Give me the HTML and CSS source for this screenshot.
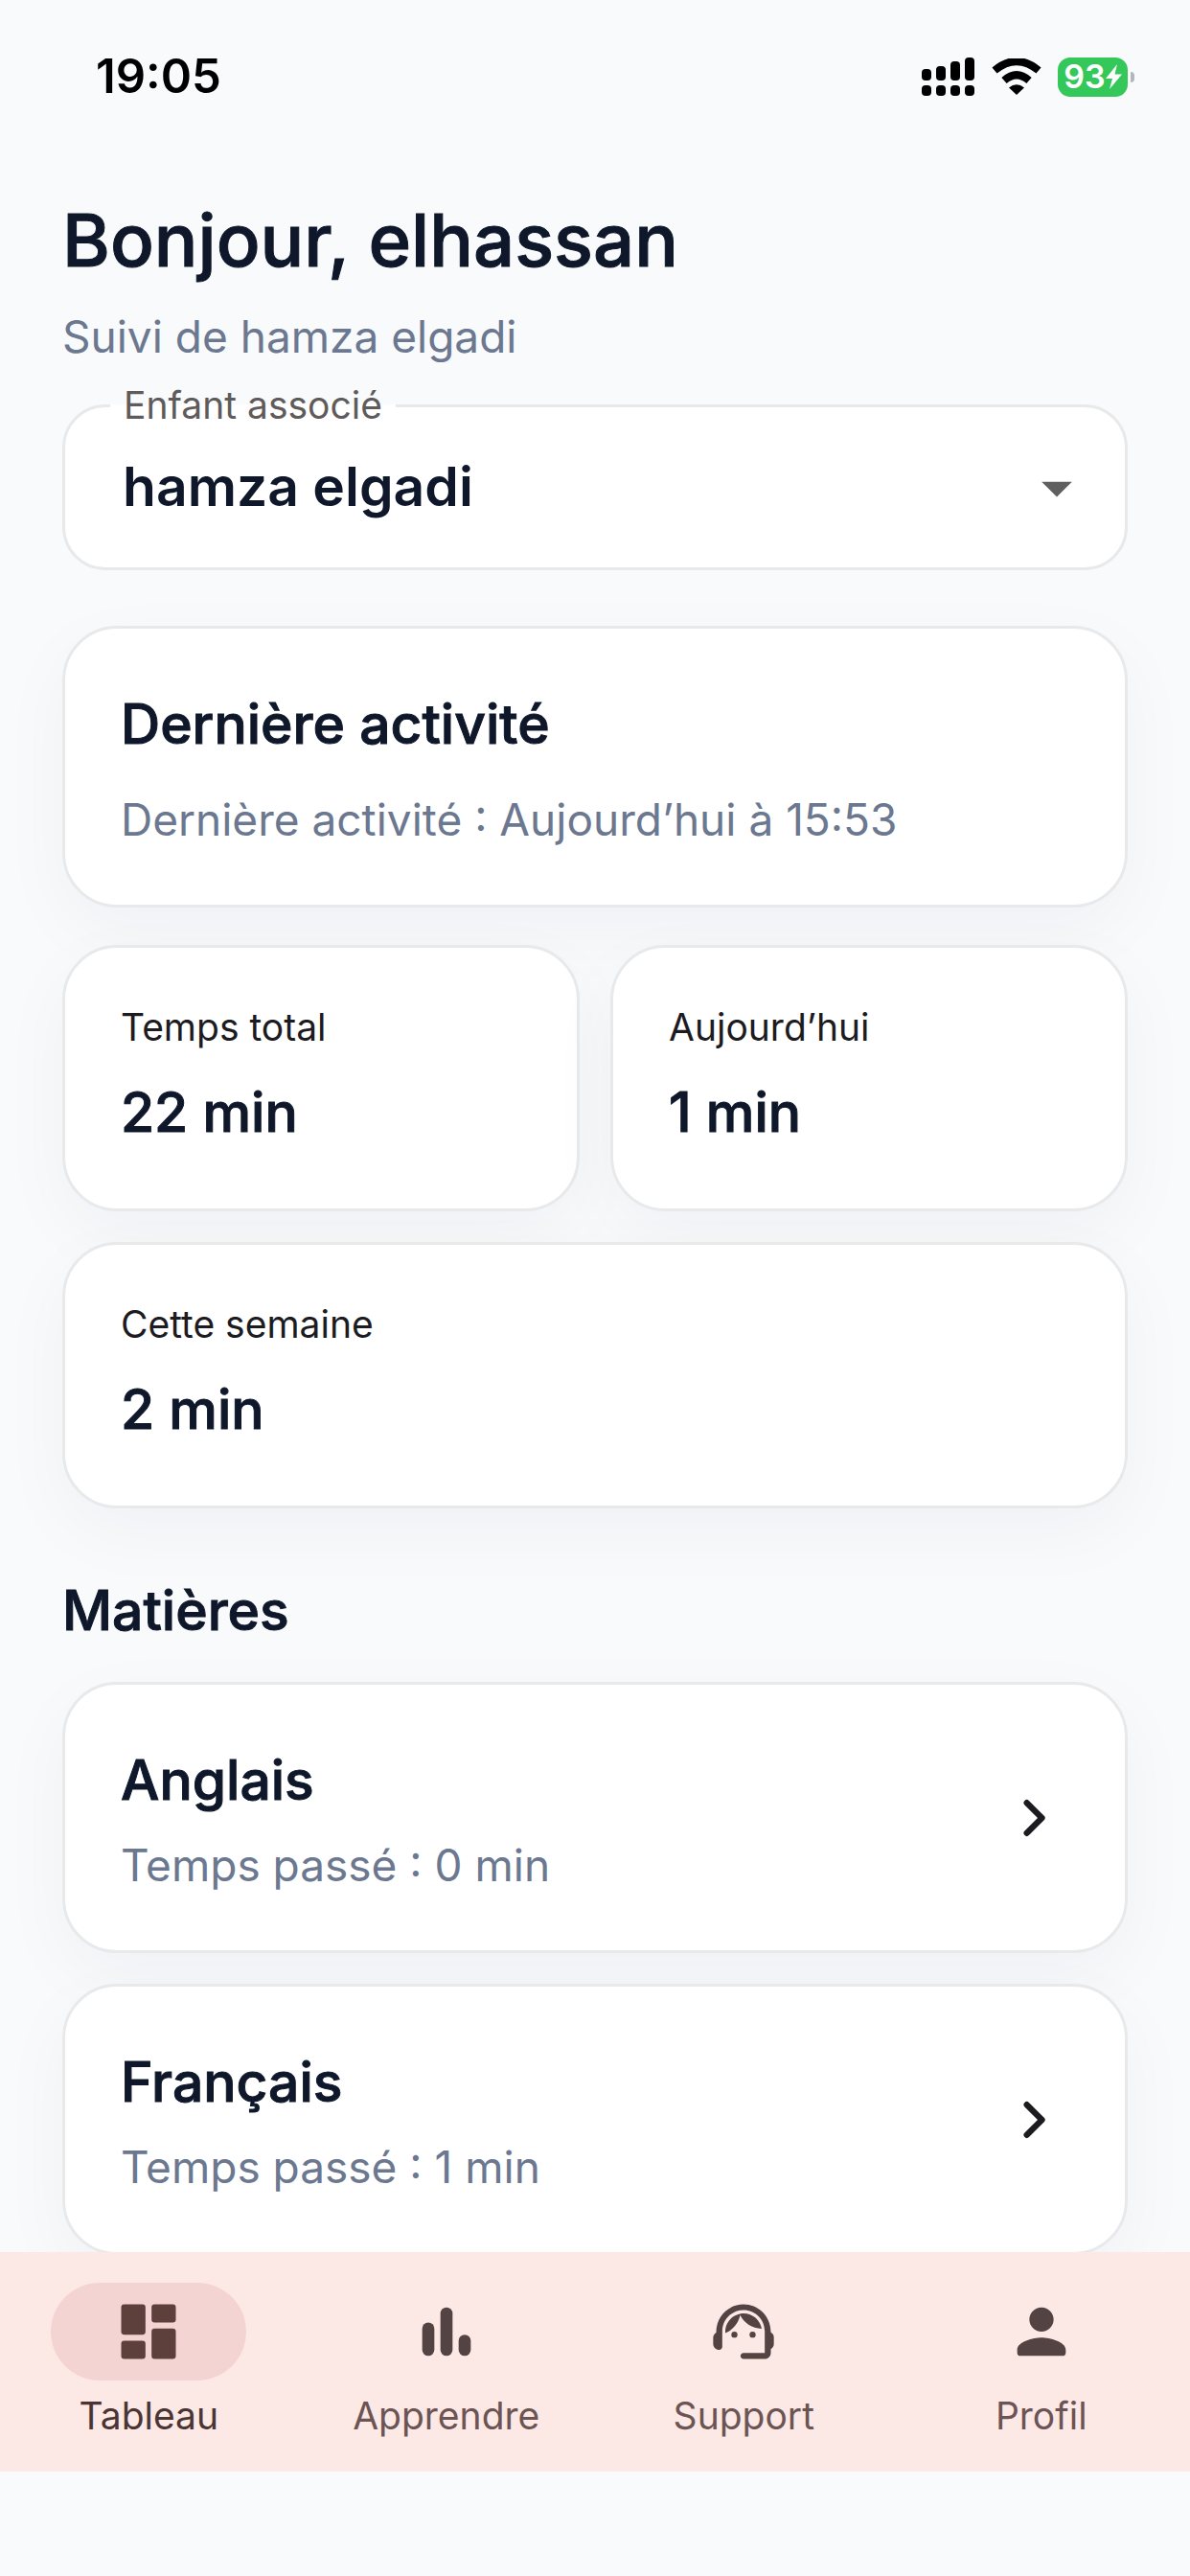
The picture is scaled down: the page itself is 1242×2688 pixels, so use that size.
FILE: index.html
```html
<!DOCTYPE html>
<html lang="fr">
<head>
  <meta charset="UTF-8" />
  <meta name="viewport" content="width=device-width, initial-scale=1.0" />
  <title>Tableau</title>
  <link rel="stylesheet" href="styles.css">
</head>
<body>
  <div class="status-bar">
    <span class="time">19:05</span>
    <div class="status-icons">
      <svg class="signal" viewBox="0 0 56 40">
        <rect x="0" y="12" width="10" height="12" rx="4"/>
        <rect x="15" y="9" width="10" height="15" rx="4"/>
        <rect x="30" y="4" width="10" height="20" rx="4"/>
        <rect x="45" y="0" width="10" height="24" rx="4"/>
        <rect x="0" y="29" width="10" height="11" rx="4"/>
        <rect x="15" y="29" width="10" height="11" rx="4"/>
        <rect x="30" y="29" width="10" height="11" rx="4"/>
        <rect x="45" y="29" width="10" height="11" rx="4"/>
      </svg>
      <svg class="wifi" viewBox="0 0 52 38">
        <path d="M3 12.500Q26 -6.500 49 12.500" fill="none" stroke="#000" stroke-width="8"/>
        <path d="M13 23Q26 11.500 39 23" fill="none" stroke="#000" stroke-width="8"/>
        <path d="M18 30.500Q26 24 34 30.500L26 38Z"/>
      </svg>
      <div class="battery">
        <span>93</span>
        <svg class="bolt" viewBox="0 0 17 26"><path d="M12 0L0 15h7L4 26L17 10.500H9.500Z"/></svg>
      </div>
    </div>
  </div>

  <main>
    <h1>Bonjour, elhassan</h1>
    <p class="muted">Suivi de hamza elgadi</p>

    <fieldset class="field">
      <legend><label for="enfant">Enfant associé</label></legend>
      <select id="enfant">
        <option>hamza elgadi</option>
      </select>
      <svg class="icon arrow" viewBox="0 0 24 24"><path d="M7 10l5 5 5-5z"/></svg>
    </fieldset>

    <section class="card activity">
      <h2>Dernière activité</h2>
      <p class="muted">Dernière activité : Aujourd’hui à 15:53</p>
    </section>

    <section class="stats">
      <div class="card stat">
        <p class="stat-label">Temps total</p>
        <p class="stat-value">22 min</p>
      </div>
      <div class="card stat">
        <p class="stat-label">Aujourd’hui</p>
        <p class="stat-value">1 min</p>
      </div>
      <div class="card stat wide">
        <p class="stat-label">Cette semaine</p>
        <p class="stat-value">2 min</p>
      </div>
    </section>

    <h2 class="section-title">Matières</h2>
    <div class="subjects">
      <a class="card subject" href="#anglais">
        <div class="subject-text">
          <h3>Anglais</h3>
          <p class="muted">Temps passé : 0 min</p>
        </div>
        <svg class="icon chevron" viewBox="0 0 24 24"><path d="M10 7L15 12L10 17"/></svg>
      </a>
      <a class="card subject" href="#francais">
        <div class="subject-text">
          <h3>Français</h3>
          <p class="muted">Temps passé : 1 min</p>
        </div>
        <svg class="icon chevron" viewBox="0 0 24 24"><path d="M10 7L15 12L10 17"/></svg>
      </a>
    </div>
  </main>

  <nav class="nav">
    <a class="nav-item active" href="#tableau">
      <span class="pill">
        <svg class="icon" viewBox="0 0 24 24">
          <rect x="3" y="3" width="8" height="10" rx="1"/>
          <rect x="3" y="15" width="8" height="6" rx="1"/>
          <rect x="13" y="3" width="8" height="6" rx="1"/>
          <rect x="13" y="11" width="8" height="10" rx="1"/>
        </svg>
      </span>
      <span>Tableau</span>
    </a>
    <a class="nav-item" href="#apprendre">
      <span class="pill">
        <svg class="icon" viewBox="0 0 24 24">
          <rect x="4" y="9" width="4" height="11" rx="2"/>
          <rect x="10" y="4" width="4" height="16" rx="2"/>
          <rect x="16" y="13" width="4" height="7" rx="2"/>
        </svg>
      </span>
      <span>Apprendre</span>
    </a>
    <a class="nav-item" href="#support">
      <span class="pill">
        <svg class="icon" viewBox="0 0 24 24">
          <path d="M21 12.220C21 6.730 16.740 3 12 3c-4.690 0-9 3.650-9 9.280-.6.340-1 .980-1 1.720v2c0 1.100.9 2 2 2 .550 0 1-.450 1-1v-5.100c0-3.870 3.130-7 7-7s7 3.130 7 7V19h-7c-.550 0-1 .450-1 1s.450 1 1 1h7c1.100 0 2-.9 2-2v-1.220c.590-.310 1-.920 1-1.640v-2.300c0-.7-.410-1.310-1-1.620z"/>
          <circle cx="9" cy="13" r="1"/>
          <circle cx="15" cy="13" r="1"/>
          <path d="M18 11.030C17.520 8.180 15.040 6 12.050 6c-3.030 0-6.290 2.510-6.030 6.450 2.470-1.010 4.330-3.210 4.860-5.890 1.310 2.630 4 4.440 7.120 4.470z"/>
        </svg>
      </span>
      <span>Support</span>
    </a>
    <a class="nav-item" href="#profil">
      <span class="pill">
        <svg class="icon" viewBox="0 0 24 24">
          <path d="M12 12c2.210 0 4-1.790 4-4s-1.790-4-4-4-4 1.790-4 4 1.790 4 4 4zm0 2c-2.670 0-8 1.340-8 4v1c0 .550.450 1 1 1h14c.550 0 1-.450 1-1v-1c0-2.660-5.330-4-8-4z"/>
        </svg>
      </span>
      <span>Profil</span>
    </a>
  </nav>
</body>
</html>
```
FILE: styles.css
```css
* {
  box-sizing: border-box;
}
body {
  margin: 0;
  height: 100vh;
  padding-bottom: 109px;
  display: flex;
  flex-direction: column;
  background: #f8fafc;
  color: #0f172a;
  font-family: Inter, "Liberation Sans", sans-serif;
}
h1, h2, h3, p {
  margin: 0;
}
a {
  color: inherit;
  text-decoration: none;
}
.icon {
  width: 76px;
  height: 76px;
  fill: currentColor;
  flex: none;
}

/* status bar */
.status-bar {
  display: flex;
  justify-content: space-between;
  align-items: center;
  padding: 50px 59px 0 100px;
  color: #000;
}
.time {
  font-size: 49px;
  line-height: 60px;
  font-weight: 600;
}
.status-icons {
  display: flex;
  align-items: center;
  gap: 17px;
}
.signal {
  width: 56px;
  height: 40px;
}
.wifi {
  width: 52px;
  height: 38px;
}
.battery {
  position: relative;
  display: flex;
  align-items: center;
  justify-content: center;
  width: 73px;
  height: 41px;
  margin-right: 6px;
  border-radius: 13px;
  background: #34c759;
  color: #fff;
  font-size: 34px;
  line-height: 40px;
  font-weight: 600;
}
.battery::after {
  content: "";
  position: absolute;
  right: -7px;
  top: 15px;
  width: 4px;
  height: 11px;
  border-radius: 0 4px 4px 0;
  background: #b4b7ba;
}
.bolt {
  width: 17px;
  height: 26px;
  fill: #fff;
}

/* content */
main {
  flex: 1;
  min-height: 0;
  padding: 92px 65px 0;
  overflow-y: auto;
  scrollbar-width: none;
}
h1 {
  font-size: 76px;
  line-height: 96px;
  margin-bottom: 22px;
}
h2, h3, .stat-value {
  font-size: 57px;
  line-height: 84px;
}
h1, h2, h3, .stat-value {
  font-weight: 500;
  -webkit-text-stroke: 1px currentColor;
}
.muted {
  font-size: 46px;
  line-height: 62px;
  color: #6b7890;
}
.field {
  position: relative;
  margin: 18px 0 58px;
  padding: 26px 60px 48px;
  border: 3px solid #e8e9eb;
  border-radius: 45px;
  background: #fff;
}
legend {
  margin-left: -13px;
  padding: 0 14px;
  font-size: 39px;
  line-height: 46px;
  color: #5f5b5b;
}
select {
  display: block;
  width: 100%;
  padding: 0;
  border: 0;
  appearance: none;
  background: none;
  color: #0f172a;
  font-family: inherit;
  font-size: 57px;
  line-height: 72px;
  font-weight: 600;
}
.arrow {
  position: absolute;
  right: 33px;
  top: 25px;
  color: #5f5f5f;
  pointer-events: none;
}
.card {
  padding: 58px;
  border: 3px solid #e8e9eb;
  border-radius: 57px;
  background: #fff;
  box-shadow: 0 24px 76px rgba(15, 23, 42, 0.04);
}
.activity h2 {
  margin-bottom: 26px;
}
.stats {
  display: grid;
  grid-template-columns: 1fr 1fr;
  gap: 32px;
  margin-top: 39px;
}
.wide {
  grid-column: span 2;
}
.stat-label {
  margin-bottom: 22px;
  font-size: 39px;
  line-height: 50px;
  color: #1c1b1f;
}
.section-title {
  margin: 65px 0 32px;
}
.subjects {
  display: flex;
  flex-direction: column;
  gap: 32px;
}
.subject {
  display: flex;
  align-items: center;
}
.subject-text {
  flex: 1;
}
.subject h3 {
  margin-bottom: 15px;
}
.chevron {
  fill: none;
  stroke: #1c1b1f;
  stroke-width: 2;
  stroke-linecap: round;
  stroke-linejoin: round;
}

/* bottom navigation */
.nav {
  position: relative;
  display: flex;
  padding: 32px 0 33px;
  background: #fce9e6;
}
.nav-item {
  flex: 1;
  display: flex;
  flex-direction: column;
  align-items: center;
  gap: 12px;
  font-size: 39px;
  line-height: 50px;
  color: #6b5453;
}
.pill {
  display: flex;
  align-items: center;
  justify-content: center;
  width: 204px;
  height: 102px;
  border-radius: 51px;
  color: #534343;
}
.active {
  color: #4a3534;
}
.active .pill {
  background: #f4d4d2;
  color: #5d3f3c;
}
```
